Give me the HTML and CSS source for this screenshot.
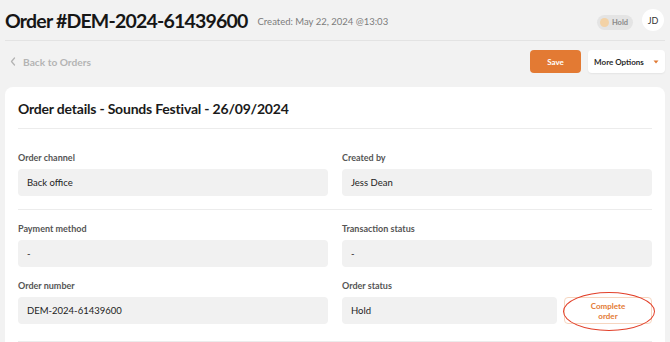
FILE: index.html
```html
<!DOCTYPE html>
<html lang="en">

<head>
    <meta charset="UTF-8">
    <meta name="viewport" content="width=device-width, initial-scale=1.0">
    <title>Order #DEM-2024-61439600</title>

    <link rel="stylesheet" href="styles.css">
</head>

<body>
    <div class="main">
        <div class="topBar">
            <h1>Order #DEM-2024-61439600</h1>
            <span class="created">Created: May 22, 2024 @13:03</span>
            <div class="topRight">
                <div class="statusPill"><span class="dot"></span>Hold</div>
                <div class="avatar">JD</div>
            </div>
        </div>

        <div class="toolBar">
            <a class="backLink" href="#">
                <svg width="6" height="9" viewBox="0 0 6 9"><path d="M4.5 1 L1.5 4.5 L4.5 8" fill="none" stroke="#b4b4b4" stroke-width="1.3" stroke-linecap="round" stroke-linejoin="round"/></svg>
                Back to Orders
            </a>
            <div class="actions">
                <div class="btn btnSave">Save</div>
                <div class="btn btnMore">More Options
                    <svg width="6" height="4" viewBox="0 0 6 4"><path d="M0.5 0.5 L5.5 0.5 L3 3.5 Z" fill="#e07a34"/></svg>
                </div>
            </div>
        </div>

        <div class="card">
            <h2 class="cardTitle">Order details - Sounds Festival - 26/09/2024</h2>

            <div class="section first">
                <div class="field">
                    <label>Order channel</label>
                    <div class="value">Back office</div>
                </div>
                <div class="field">
                    <label>Created by</label>
                    <div class="value">Jess Dean</div>
                </div>
            </div>

            <div class="section second">
                <div class="field">
                    <label>Payment method</label>
                    <div class="value">-</div>
                </div>
                <div class="field">
                    <label>Transaction status</label>
                    <div class="value">-</div>
                </div>
                <div class="field">
                    <label>Order number</label>
                    <div class="value">DEM-2024-61439600</div>
                </div>
                <div class="field">
                    <label>Order status</label>
                    <div class="statusRow">
                        <div class="value grow">Hold</div>
                        <div class="completeBtn">Complete<br>order
                            <span class="circleMark"></span>
                        </div>
                    </div>
                </div>
            </div>
        </div>
    </div>
</body>

</html>
```

FILE: styles.css
```css
* {
    box-sizing: border-box;
}

body {
    margin: 0;
    background-color: #f2f2f2;
    font-family: "Lato", "Liberation Sans", sans-serif;
    color: #1c1c1c;
}

.main {
    height: 100vh;
    overflow: hidden;
    padding: 0 5px;
}

/* top bar */
.topBar {
    height: 41px;
    display: flex;
    align-items: center;
    border-bottom: 1px solid #e3e3e3;
}

h1 {
    margin: 0;
    font-size: 19.5px;
    font-weight: 700;
    letter-spacing: -0.8px;
    color: #161616;
}

.created {
    margin-left: 10px;
    margin-top: 3px;
    font-size: 9.5px;
    color: #7c7c7c;
}

.topRight {
    margin-left: auto;
    display: flex;
    align-items: center;
    gap: 9px;
    padding-right: 1px;
}

.statusPill {
    height: 15px;
    padding: 0 5px 0 3px;
    border-radius: 8px;
    background-color: #e4e4e4;
    display: flex;
    align-items: center;
    gap: 3px;
    font-size: 7.5px;
    font-weight: 700;
    color: #8a8a8a;
    margin-top: 4px;
}

.dot {
    width: 9px;
    height: 9px;
    border-radius: 50%;
    background-color: #f3d2a6;
}

.avatar {
    width: 22px;
    height: 22px;
    border-radius: 50%;
    background-color: #fff;
    display: flex;
    align-items: center;
    justify-content: center;
    font-size: 9px;
    color: #333;
}

/* toolbar */
.toolBar {
    height: 41px;
    margin-bottom: 5px;
    display: flex;
    align-items: center;
    justify-content: space-between;
}

.backLink {
    display: flex;
    align-items: center;
    gap: 7px;
    padding-left: 5px;
    font-size: 10.2px;
    font-weight: 700;
    color: #b4b4b4;
    text-decoration: none;
}

.actions {
    display: flex;
    gap: 7px;
}

.btn {
    height: 23px;
    border-radius: 4px;
    display: flex;
    align-items: center;
    justify-content: center;
    font-size: 8px;
    font-weight: 700;
}

.btnSave {
    width: 51px;
    background-color: #e37a33;
    color: #fff;
}

.btnMore {
    width: 77px;
    gap: 9px;
    background-color: #fff;
    color: #2a2a2a;
    box-shadow: 0 1px 2px rgba(0, 0, 0, 0.06);
}

/* card */
.card {
    background-color: #fff;
    border-radius: 8px;
    padding: 0 13px;
    height: 300px;
}

.cardTitle {
    margin: 0;
    height: 42px;
    display: flex;
    align-items: center;
    padding-top: 2px;
    border-bottom: 1px solid #ececec;
    font-size: 14px;
    font-weight: 700;
    letter-spacing: -0.2px;
    color: #1a1a1a;
}

.section {
    display: grid;
    grid-template-columns: 1fr 1fr;
    column-gap: 14px;
    border-bottom: 1px solid #ececec;
}

.section.first {
    padding: 23px 0 13px;
}

.section.second {
    padding: 13px 0 17px;
    row-gap: 13px;
}

.field label {
    display: block;
    height: 12px;
    line-height: 12px;
    margin-bottom: 5px;
    font-size: 9px;
    font-weight: 700;
    color: #555;
}

.value {
    height: 27px;
    border-radius: 4px;
    background-color: #f1f1f1;
    display: flex;
    align-items: center;
    padding-left: 9px;
    font-size: 9.5px;
    color: #222;
}

.statusRow {
    display: flex;
    gap: 7px;
}

.grow {
    flex: 1;
}

.completeBtn {
    position: relative;
    width: 88px;
    height: 27px;
    border: 1px solid #f6d6c0;
    border-radius: 4px;
    display: flex;
    align-items: center;
    justify-content: center;
    text-align: center;
    font-size: 8px;
    font-weight: 700;
    line-height: 10px;
    color: #e37a33;
}

/* red hand-drawn mark over the button */
.circleMark {
    position: absolute;
    left: -2px;
    top: -6px;
    width: 92px;
    height: 39px;
    border: 1.6px solid #e2402a;
    border-radius: 50%;
}
```
